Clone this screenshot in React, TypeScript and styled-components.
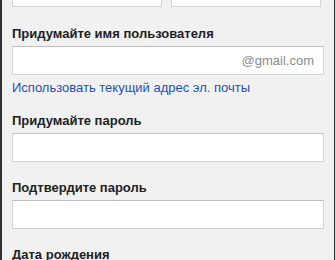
import React from "react";
import styled, { createGlobalStyle } from "styled-components";

const GlobalStyle = createGlobalStyle`
  html, body {
    margin: 0;
    padding: 0;
    overflow: hidden;
    background: #f1f1f1;
  }
  * {
    box-sizing: border-box;
  }
`;

const Page = styled.div`
  width: 335px;
  height: 260px;
  overflow: hidden;
  background-color: #f1f1f1;
  border-left: 2px solid #333;
  border-right: 1px solid #333;
  padding: 0 10px;
  font-family: "Liberation Sans", Arial, sans-serif;
  font-size: 13px;
  color: #222;
`;

const NameRow = styled.div`
  display: flex;
  gap: 9px;
  margin-top: -22px;
`;

const Field = styled.div<{ $top: number }>`
  display: flex;
  flex-direction: column;
  margin-top: ${(p) => p.$top}px;
`;

const Label = styled.label`
  font-weight: bold;
  line-height: 16px;
  margin-bottom: 4px;
`;

const InputBox = styled.div<{ $width?: number }>`
  position: relative;
  display: flex;
  align-items: center;
  justify-content: flex-end;
  width: ${(p) => (p.$width ? `${p.$width}px` : "100%")};
  height: 29px;
  background: #fff;
  border: 1px solid #d4d4d4;
  border-top-color: #c0c0c0;
  padding: 0 9px;
`;

const Suffix = styled.span`
  color: #8c8c8c;
  line-height: 16px;
`;

const Link = styled.a`
  margin-top: 5px;
  line-height: 16px;
  color: #2251b8;
  text-decoration: none;
  cursor: pointer;
`;

const App: React.FC = () => {
  return (
    <>
      <GlobalStyle />
      <Page>
        <NameRow>
          <InputBox $width={150} />
          <InputBox $width={150} />
        </NameRow>

        <Field $top={19}>
          <Label>Придумайте имя пользователя</Label>
          <InputBox>
            <Suffix>@gmail.com</Suffix>
          </InputBox>
          <Link>Использовать текущий адрес эл. почты</Link>
        </Field>

        <Field $top={17}>
          <Label>Придумайте пароль</Label>
          <InputBox />
        </Field>

        <Field $top={18}>
          <Label>Подтвердите пароль</Label>
          <InputBox />
        </Field>

        <Field $top={18}>
          <Label>Дата рождения</Label>
        </Field>
      </Page>
    </>
  );
};

export default App;
